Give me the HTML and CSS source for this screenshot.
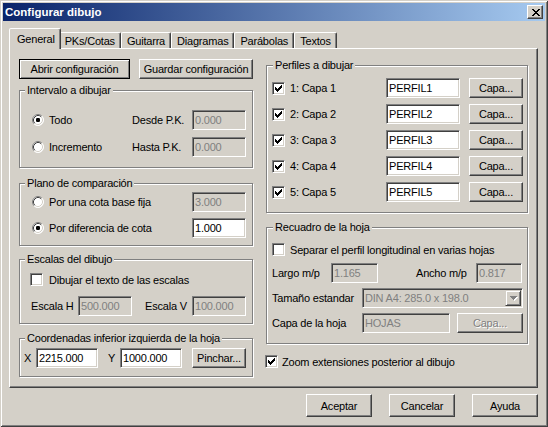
FILE: index.html
```html
<!DOCTYPE html>
<html lang="es">
<head>
<meta charset="utf-8">
<title>Configurar dibujo</title>
<link rel="stylesheet" href="styles.css">
</head>
<body>
<div class="window">
  <div class="titlebar">
    <span class="title">Configurar dibujo</span>
    <div class="close">
      <svg width="8" height="7" viewBox="0 0 8 7"><path fill="#000" d="M0 0h2v1h-2z M6 0h2v1h-2z M1 1h2v1h-2z M5 1h2v1h-2z M2 2h4v1h-4z M3 3h2v1h-2z M2 4h4v1h-4z M1 5h2v1h-2z M5 5h2v1h-2z M0 6h2v1h-2z M6 6h2v1h-2z"/></svg>
    </div>
  </div>
  <div class="client">
    <div class="tabs">
      <div class="tab active">General</div>
      <div class="tab">PKs/Cotas</div>
      <div class="tab">Guitarra</div>
      <div class="tab">Diagramas</div>
      <div class="tab">Parábolas</div>
      <div class="tab">Textos</div>
    </div>
    <div class="panel">
      <div class="col col-left">
        <div class="btnrow">
          <button class="btn default w-abrir">Abrir configuración</button>
          <button class="btn w-guardar">Guardar configuración</button>
        </div>

        <div class="group g-intervalo">
          <div class="gtitle">Intervalo a dibujar</div>
          <div class="row">
            <span class="opt w100"><svg class="radio" width="12" height="12" viewBox="0 0 12 12"><circle cx="6" cy="6" r="5.5" fill="#fff"/><path d="M2.11 9.89A5.5 5.5 0 0 1 9.89 2.11" fill="none" stroke="#808080"/><path d="M9.89 2.11A5.5 5.5 0 0 1 2.11 9.89" fill="none" stroke="#fff"/><path d="M2.82 9.18A4.5 4.5 0 0 1 9.18 2.82" fill="none" stroke="#404040"/><path d="M9.18 2.82A4.5 4.5 0 0 1 2.82 9.18" fill="none" stroke="#d4d0c8"/><rect x="4" y="4" width="4" height="4" rx="1.2" fill="#000"/></svg>Todo</span>
            <span class="lbl w60">Desde P.K.</span>
            <span class="field disabled w54">0.000</span>
          </div>
          <div class="row">
            <span class="opt w100"><svg class="radio" width="12" height="12" viewBox="0 0 12 12"><circle cx="6" cy="6" r="5.5" fill="#fff"/><path d="M2.11 9.89A5.5 5.5 0 0 1 9.89 2.11" fill="none" stroke="#808080"/><path d="M9.89 2.11A5.5 5.5 0 0 1 2.11 9.89" fill="none" stroke="#fff"/><path d="M2.82 9.18A4.5 4.5 0 0 1 9.18 2.82" fill="none" stroke="#404040"/><path d="M9.18 2.82A4.5 4.5 0 0 1 2.82 9.18" fill="none" stroke="#d4d0c8"/></svg>Incremento</span>
            <span class="lbl w60">Hasta P.K.</span>
            <span class="field disabled w54">0.000</span>
          </div>
        </div>

        <div class="group g-plano">
          <div class="gtitle">Plano de comparación</div>
          <div class="row">
            <span class="opt w160"><svg class="radio" width="12" height="12" viewBox="0 0 12 12"><circle cx="6" cy="6" r="5.5" fill="#fff"/><path d="M2.11 9.89A5.5 5.5 0 0 1 9.89 2.11" fill="none" stroke="#808080"/><path d="M9.89 2.11A5.5 5.5 0 0 1 2.11 9.89" fill="none" stroke="#fff"/><path d="M2.82 9.18A4.5 4.5 0 0 1 9.18 2.82" fill="none" stroke="#404040"/><path d="M9.18 2.82A4.5 4.5 0 0 1 2.82 9.18" fill="none" stroke="#d4d0c8"/></svg>Por una cota base fija</span>
            <span class="field disabled w54">3.000</span>
          </div>
          <div class="row">
            <span class="opt w160"><svg class="radio" width="12" height="12" viewBox="0 0 12 12"><circle cx="6" cy="6" r="5.5" fill="#fff"/><path d="M2.11 9.89A5.5 5.5 0 0 1 9.89 2.11" fill="none" stroke="#808080"/><path d="M9.89 2.11A5.5 5.5 0 0 1 2.11 9.89" fill="none" stroke="#fff"/><path d="M2.82 9.18A4.5 4.5 0 0 1 9.18 2.82" fill="none" stroke="#404040"/><path d="M9.18 2.82A4.5 4.5 0 0 1 2.82 9.18" fill="none" stroke="#d4d0c8"/><rect x="4" y="4" width="4" height="4" rx="1.2" fill="#000"/></svg>Por diferencia de cota</span>
            <span class="field w54">1.000</span>
          </div>
        </div>

        <div class="group g-escalas">
          <div class="gtitle">Escalas del dibujo</div>
          <div class="row row-check">
            <span class="opt"><span class="chk"></span>Dibujar el texto de las escalas</span>
          </div>
          <div class="row">
            <span class="lbl w47">Escala H</span>
            <span class="field disabled w54">500.000</span>
            <span class="lbl w60 pad13">Escala V</span>
            <span class="field disabled w54">100.000</span>
          </div>
        </div>

        <div class="group g-coord">
          <div class="gtitle">Coordenadas inferior izquierda de la hoja</div>
          <div class="row">
            <span class="lbl w12">X</span>
            <span class="field w62">2215.000</span>
            <span class="lbl w22 pad10">Y</span>
            <span class="field w62">1000.000</span>
            <button class="btn w54 ml10">Pinchar...</button>
          </div>
        </div>
      </div>

      <div class="col col-right">
        <div class="group g-perfiles">
          <div class="gtitle">Perfiles a dibujar</div>
          <div class="row">
            <span class="opt w114"><span class="chk"><svg width="7" height="7" viewBox="0 0 7 7"><path fill="#000" d="M0 2h1v3h-1z M1 3h1v3h-1z M2 4h1v3h-1z M3 3h1v3h-1z M4 2h1v3h-1z M5 1h1v3h-1z M6 0h1v3h-1z"/></svg></span>1: Capa 1</span>
            <span class="field w74">PERFIL1</span>
            <button class="btn w54 ml9">Capa...</button>
          </div>
          <div class="row">
            <span class="opt w114"><span class="chk"><svg width="7" height="7" viewBox="0 0 7 7"><path fill="#000" d="M0 2h1v3h-1z M1 3h1v3h-1z M2 4h1v3h-1z M3 3h1v3h-1z M4 2h1v3h-1z M5 1h1v3h-1z M6 0h1v3h-1z"/></svg></span>2: Capa 2</span>
            <span class="field w74">PERFIL2</span>
            <button class="btn w54 ml9">Capa...</button>
          </div>
          <div class="row">
            <span class="opt w114"><span class="chk"><svg width="7" height="7" viewBox="0 0 7 7"><path fill="#000" d="M0 2h1v3h-1z M1 3h1v3h-1z M2 4h1v3h-1z M3 3h1v3h-1z M4 2h1v3h-1z M5 1h1v3h-1z M6 0h1v3h-1z"/></svg></span>3: Capa 3</span>
            <span class="field w74">PERFIL3</span>
            <button class="btn w54 ml9">Capa...</button>
          </div>
          <div class="row">
            <span class="opt w114"><span class="chk"><svg width="7" height="7" viewBox="0 0 7 7"><path fill="#000" d="M0 2h1v3h-1z M1 3h1v3h-1z M2 4h1v3h-1z M3 3h1v3h-1z M4 2h1v3h-1z M5 1h1v3h-1z M6 0h1v3h-1z"/></svg></span>4: Capa 4</span>
            <span class="field w74">PERFIL4</span>
            <button class="btn w54 ml9">Capa...</button>
          </div>
          <div class="row">
            <span class="opt w114"><span class="chk"><svg width="7" height="7" viewBox="0 0 7 7"><path fill="#000" d="M0 2h1v3h-1z M1 3h1v3h-1z M2 4h1v3h-1z M3 3h1v3h-1z M4 2h1v3h-1z M5 1h1v3h-1z M6 0h1v3h-1z"/></svg></span>5: Capa 5</span>
            <span class="field w74">PERFIL5</span>
            <button class="btn w54 ml9">Capa...</button>
          </div>
        </div>

        <div class="group g-recuadro">
          <div class="gtitle">Recuadro de la hoja</div>
          <div class="row row-check">
            <span class="opt"><span class="chk"></span>Separar el perfil longitudinal en varias hojas</span>
          </div>
          <div class="row">
            <span class="lbl w59">Largo m/p</span>
            <span class="field disabled w47">1.165</span>
            <span class="lbl w98 pad38">Ancho m/p</span>
            <span class="field disabled w46">0.817</span>
          </div>
          <div class="row">
            <span class="lbl w90">Tamaño estandar</span>
            <span class="field disabled combo w161"><span class="combo-text">DIN A4: 285.0 x 198.0</span><span class="combo-btn"><svg width="8" height="5" viewBox="0 0 8 5"><path fill="#fff" d="M1 1h7v1h-7z M2 2h5v1h-5z M3 3h3v1h-3z M4 4h1v1h-1z"/><path fill="#808080" d="M0 0h7v1h-7z M1 1h5v1h-5z M2 2h3v1h-3z M3 3h1v1h-1z"/></svg></span></span>
          </div>
          <div class="row">
            <span class="lbl w90">Capa de la hoja</span>
            <span class="field disabled w88">HOJAS</span>
            <button class="btn disabled w66 ml7">Capa...</button>
          </div>
        </div>

        <div class="row-check zoom-opt">
          <span class="opt"><span class="chk"><svg width="7" height="7" viewBox="0 0 7 7"><path fill="#000" d="M0 2h1v3h-1z M1 3h1v3h-1z M2 4h1v3h-1z M3 3h1v3h-1z M4 2h1v3h-1z M5 1h1v3h-1z M6 0h1v3h-1z"/></svg></span>Zoom extensiones posterior al dibujo</span>
        </div>
      </div>
    </div>
    <div class="footer">
      <button class="btn foot">Aceptar</button>
      <button class="btn foot">Cancelar</button>
      <button class="btn foot">Ayuda</button>
    </div>
  </div>
</div>
</body>
</html>
```

FILE: styles.css
```css
* { box-sizing: border-box; }
html, body { margin: 0; padding: 0; }
body {
  width: 548px;
  height: 427px;
  overflow: hidden;
  background: #d4d0c8;
  font-family: "Liberation Sans", Arial, sans-serif;
  font-size: 11px;
  letter-spacing: -0.2px;
  color: #000;
}
.window {
  width: 548px;
  height: 427px;
  padding: 3px;
  background: #d4d0c8;
  box-shadow: inset 1px 1px #d4d0c8, inset -1px -1px #404040, inset 2px 2px #fff, inset -2px -2px #808080;
}
.titlebar {
  height: 18px;
  display: flex;
  align-items: center;
  justify-content: space-between;
  padding: 0 2px;
  background: linear-gradient(to right, #0a246a, #a6caf0);
  color: #fff;
  font-weight: bold;
  font-size: 11.5px;
  letter-spacing: 0;
}
.title { line-height: 18px; }
.close {
  width: 16px;
  height: 14px;
  background: #d4d0c8;
  border: 1px solid;
  border-color: #fff #404040 #404040 #fff;
  box-shadow: inset -1px -1px #808080;
  display: flex;
  align-items: center;
  justify-content: center;
}
.close svg { display: block; margin-left: 1px; }
.client { padding: 7px 7px 0 6px; }

.tabs { display: flex; align-items: flex-end; height: 20px; }
.tab {
  height: 16px;
  line-height: 14px;
  padding: 1px 5px 0;
  border: 1px solid;
  border-bottom: none;
  border-color: #fff #404040 transparent #fff;
  box-shadow: inset -1px 0 #808080;
  border-radius: 2px 2px 0 0;
  white-space: nowrap;
}
.tab.active {
  height: 21px;
  line-height: 20px;
  padding: 0 5px 0 7px;
  margin-bottom: -1px;
  margin-right: -2px;
  position: relative;
  z-index: 1;
  background: #d4d0c8;
}

.panel {
  height: 340px;
  border: 1px solid;
  border-color: #fff #404040 #404040 #fff;
  box-shadow: inset -1px -1px #808080;
  padding: 10px 0 0 9px;
  display: flex;
  align-items: flex-start;
  gap: 13px;
}
.col { display: flex; flex-direction: column; }
.col-left { width: 234px; }
.col-right { width: 262px; }

.btnrow { display: flex; gap: 9px; height: 20px; }

.btn {
  font: inherit;
  letter-spacing: inherit;
  color: #000;
  background: #d4d0c8;
  height: 20px;
  padding: 0;
  border: 1px solid;
  border-color: #fff #404040 #404040 #fff;
  box-shadow: inset -1px -1px #808080;
  white-space: nowrap;
  flex: none;
}
.btn.default {
  border-color: #000;
  box-shadow: inset 1px 1px #fff, inset -1px -1px #808080;
}
.btn.disabled { color: #808080; text-shadow: 1px 1px #fff; }
.w-abrir { width: 111px; }
.w-guardar { width: 114px; }

.group {
  border: 1px solid #808080;
  box-shadow: inset 1px 1px #fff, 1px 1px #fff;
  display: flex;
  flex-direction: column;
}
.gtitle {
  margin: -7px 0 0 5px;
  padding: 0 2px;
  height: 13px;
  line-height: 13px;
  width: fit-content;
  background: #d4d0c8;
  white-space: nowrap;
}
.row { display: flex; align-items: center; height: 20px; flex: none; }
.row-check { height: 13px; display: flex; align-items: center; }

.opt { display: flex; align-items: center; white-space: nowrap; flex: none; }
.opt .radio { display: block; margin-right: 5px; flex: none; }
.lbl { white-space: nowrap; flex: none; }

.chk {
  width: 13px;
  height: 13px;
  flex: none;
  padding: 2px;
  margin-right: 5px;
  background: #fff;
  border: 1px solid;
  border-color: #808080 #fff #fff #808080;
  box-shadow: inset 1px 1px #404040, inset -1px -1px #d4d0c8;
}
.chk svg { display: block; }

.field {
  height: 20px;
  line-height: 18px;
  padding: 0 2px;
  background: #fff;
  border: 1px solid;
  border-color: #808080 #fff #fff #808080;
  box-shadow: inset 1px 1px #404040, inset -1px -1px #d4d0c8;
  white-space: nowrap;
  overflow: hidden;
  flex: none;
}
.field.disabled { background: #d4d0c8; color: #808080; }
.combo { display: flex; align-items: center; justify-content: space-between; padding: 1px 1px 1px 2px; }
.combo-text { line-height: 16px; }
.combo-btn {
  width: 16px;
  height: 16px;
  background: #d4d0c8;
  border: 1px solid;
  border-color: #d4d0c8 #404040 #404040 #d4d0c8;
  box-shadow: inset 1px 1px #fff, inset -1px -1px #808080;
  display: flex;
  align-items: center;
  justify-content: center;
}
.combo-btn svg { display: block; margin: 1px 0 0 1px; }

/* widths */
.w12 { width: 12px; }
.w22 { width: 22px; }
.w46 { width: 46px; }
.w47 { width: 47px; }
.w54 { width: 54px; }
.w59 { width: 59px; }
.w60 { width: 60px; }
.w62 { width: 62px; }
.w66 { width: 66px; }
.w74 { width: 74px; }
.w88 { width: 88px; }
.w90 { width: 90px; }
.w98 { width: 98px; }
.w100 { width: 100px; }
.w114 { width: 114px; }
.w160 { width: 160px; }
.w161 { width: 161px; }
.pad10 { padding-left: 10px; }
.pad13 { padding-left: 13px; }
.pad38 { padding-left: 38px; }
.ml7 { margin-left: 7px; }
.ml9 { margin-left: 9px; }
.ml10 { margin-left: 10px; }

/* group specifics */
.g-intervalo { margin-top: 11px; padding: 0 5px 10px 12px; }
.g-intervalo .gtitle { margin-left: -7px; }
.g-intervalo .gtitle + .row { margin-top: 13px; }
.g-intervalo .row + .row { margin-top: 7px; }

.g-plano { margin-top: 15px; padding: 0 5px 7px 12px; }
.g-plano .gtitle { margin-left: -7px; }
.g-plano .gtitle + .row { margin-top: 2px; }
.g-plano .row + .row { margin-top: 6px; }

.g-escalas { margin-top: 13px; padding: 0 5px 7px 10px; }
.g-escalas .gtitle { margin-left: -5px; }
.g-escalas .gtitle + .row-check { margin-top: 7px; }
.g-escalas .row-check .chk { margin-right: 6px; }
.g-escalas .row-check + .row { margin-top: 10px; padding-left: 1px; }

.g-coord { margin-top: 14px; padding: 0 5px 8px 4px; }
.g-coord .gtitle { margin-left: 1px; }
.g-coord .gtitle + .row { margin-top: 3px; }

.g-perfiles { margin-top: 6px; padding: 0 3px 10px 5px; }
.g-perfiles .gtitle { margin-left: 1px; }
.g-perfiles .gtitle + .row { margin-top: 6px; }
.g-perfiles .row + .row { margin-top: 6px; }

.g-recuadro { margin-top: 14px; padding: 0 3px 10px 5px; }
.g-recuadro .gtitle { margin-left: 1px; }
.g-recuadro .gtitle + .row-check { margin-top: 9px; }
.g-recuadro .row-check .chk { margin-right: 5px; }
.g-recuadro .row-check + .row { margin-top: 10px; }
.g-recuadro .row + .row { margin-top: 7px; }
.g-recuadro .row + .row + .row { margin-top: 5px; }

.zoom-opt { margin-top: 11px; margin-left: -1px; }
.zoom-opt .chk { margin-right: 4px; }

.footer { display: flex; justify-content: flex-end; gap: 17px; margin-top: 6px; }
.btn.foot { width: 66px; height: 23px; }
```
